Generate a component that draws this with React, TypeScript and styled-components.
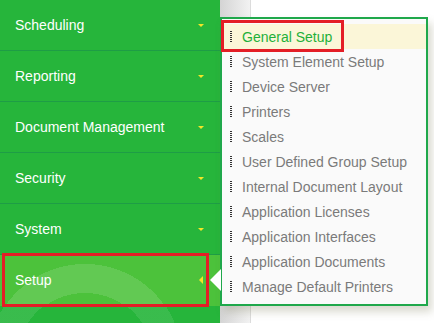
import React from "react";
import styled, { createGlobalStyle } from "styled-components";

const Global = createGlobalStyle`
  html, body {
    margin: 0;
    padding: 0;
    background: #ffffff;
    font-family: "Liberation Sans", Arial, sans-serif;
  }
`;

const Page = styled.div`
  position: relative;
  display: flex;
  width: 434px;
  height: 323px;
  overflow: hidden;
`;

const Sidebar = styled.div`
  width: 220px;
  flex: none;
  display: flex;
  flex-direction: column;
  background: #26b53b;
  background-image: radial-gradient(
    circle at 85px 360px,
    transparent 0 68px,
    rgba(255, 255, 255, 0.09) 68px 97px,
    transparent 97px
  );
`;

const Row = styled.div<{ $active?: boolean }>`
  position: relative;
  height: 50px;
  flex: none;
  display: flex;
  align-items: center;
  justify-content: space-between;
  padding: 0 15px;
  border-bottom: 1px solid #1e9d46;
  color: #ffffff;
  font-size: 14px;
  background: ${(p) =>
    p.$active
      ? `radial-gradient(circle at 85px 106px, transparent 0 68px, rgba(255,255,255,0.12) 68px 97px, transparent 97px), #4cc23b`
      : "transparent"};
  border-bottom-color: ${(p) => (p.$active ? "transparent" : "#1e9d46")};
`;

const CaretDown = styled.span`
  width: 0;
  height: 0;
  margin-right: 1px;
  border-left: 3px solid transparent;
  border-right: 3px solid transparent;
  border-top: 3px solid #f3e628;
`;

const CaretLeft = styled.span`
  width: 0;
  height: 0;
  margin-right: 2px;
  border-top: 4px solid transparent;
  border-bottom: 4px solid transparent;
  border-right: 4px solid #f3e628;
`;

const RedMark = styled.span`
  position: absolute;
  left: 2px;
  right: 11px;
  top: -2px;
  bottom: -2px;
  border: 3px solid #e41e26;
  pointer-events: none;
`;

const Content = styled.div`
  flex: 1;
  display: flex;
`;

const Gutter = styled.div`
  width: 30px;
  background: linear-gradient(to right, #d4d4d4, #f2f2f2);
  border-right: 1px solid #dcdcdc;
`;

const Pointer = styled.span`
  position: absolute;
  left: 210px;
  top: 269px;
  width: 0;
  height: 0;
  border-top: 11px solid transparent;
  border-bottom: 11px solid transparent;
  border-right: 11px solid #ffffff;
  z-index: 3;
`;

const Dropdown = styled.ul`
  position: absolute;
  left: 220px;
  top: 17px;
  width: 204px;
  margin: 0;
  padding: 5px 0;
  list-style: none;
  background: #fafafa;
  border: 2px solid #1fa84b;
  box-shadow: 4px 6px 8px rgba(110, 110, 70, 0.25);
  z-index: 2;
`;

const Item = styled.li<{ $active?: boolean }>`
  position: relative;
  height: 25px;
  display: flex;
  align-items: center;
  gap: 10px;
  padding-left: 8px;
  font-size: 14px;
  color: ${(p) => (p.$active ? "#1fb03a" : "#7a7a7a")};
  background: ${(p) => (p.$active ? "#fbf6d8" : "transparent")};
`;

const Handle = styled.span`
  width: 2px;
  height: 11px;
  flex: none;
  background: repeating-linear-gradient(
    to bottom,
    #333 0 1px,
    transparent 1px 2px
  );
`;

const ItemMark = styled.span`
  position: absolute;
  left: -1px;
  top: -4px;
  width: 117px;
  height: 26px;
  border: 3px solid #e41e26;
  pointer-events: none;
`;

const menu = [
  "Scheduling",
  "Reporting",
  "Document Management",
  "Security",
  "System",
];

const items = [
  "General Setup",
  "System Element Setup",
  "Device Server",
  "Printers",
  "Scales",
  "User Defined Group Setup",
  "Internal Document Layout",
  "Application Licenses",
  "Application Interfaces",
  "Application Documents",
  "Manage Default Printers",
];

export default function App() {
  return (
    <>
      <Global />
      <Page>
        <Sidebar>
          {menu.map((m) => (
            <Row key={m}>
              <span>{m}</span>
              <CaretDown />
            </Row>
          ))}
          <Row $active>
            <span>Setup</span>
            <CaretLeft />
            <RedMark />
          </Row>
        </Sidebar>
        <Content>
          <Gutter />
        </Content>
        <Pointer />
        <Dropdown>
          {items.map((it, i) => (
            <Item key={it} $active={i === 0}>
              <Handle />
              <span>{it}</span>
              {i === 0 && <ItemMark />}
            </Item>
          ))}
        </Dropdown>
      </Page>
    </>
  );
}
